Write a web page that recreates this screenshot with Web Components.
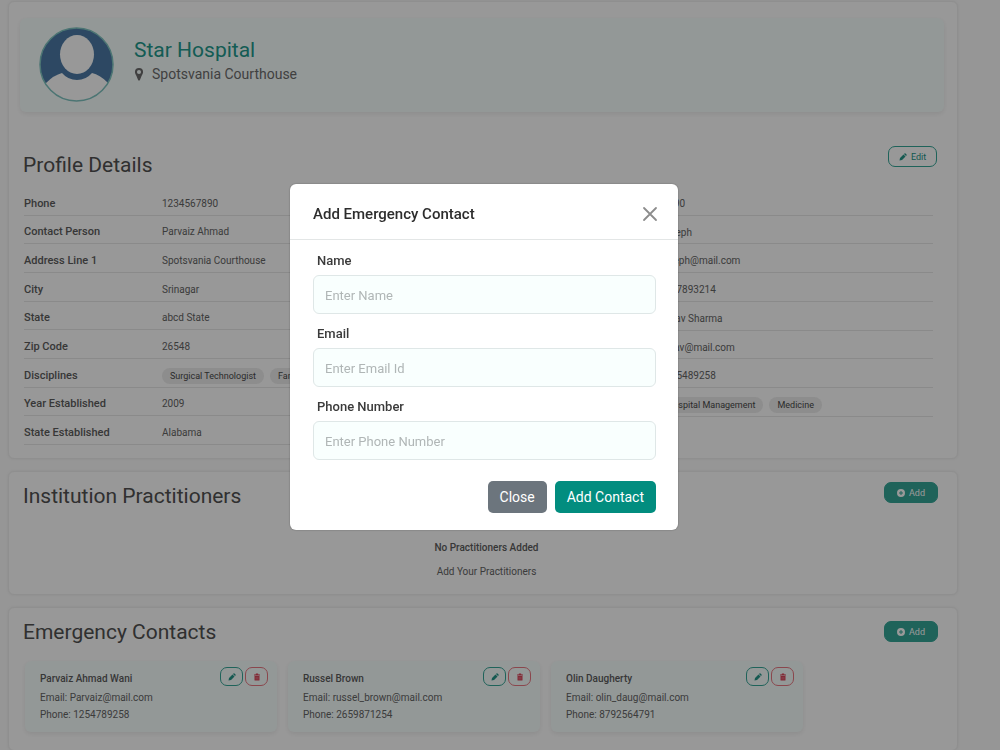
<!DOCTYPE html>
<html lang="en">
<head>
<meta charset="utf-8">
<title>Star Hospital</title>
<style>
  html { overflow: hidden; }
  body { margin: 0; background: #fafafa; color: #646464; font: 10px/16px Roboto, sans-serif; }
</style>
</head>
<body>
<hospital-page></hospital-page>
<script>
const ICONS = {
  pencil: '<svg viewBox="0 0 16 16"><path fill="currentColor" d="M1 15l1-5 7-7 4 4-7 7zM10 2l1-1q1-1 2 0l2 2q1 1 0 2l-1 1z"/></svg>',
  trash: '<svg viewBox="0 0 16 16"><path fill="currentColor" d="M2 3h3l1-2h4l1 2h3v2H2zM3 6h10v8q0 1-1 1H4q-1 0-1-1z"/><path d="M6 8v5M8 8v5M10 8v5" stroke="#fff" stroke-opacity=".35" fill="none"/></svg>',
  plus: '<svg viewBox="0 0 16 16"><path fill="currentColor" fill-rule="evenodd" d="M8 0a8 8 0 1 0 0 16A8 8 0 0 0 8 0zM7 4h2v3h3v2H9v3H7V9H4V7h3z"/></svg>',
  pin: '<svg viewBox="0 0 12 16"><path fill="currentColor" fill-rule="evenodd" d="M6 0a5 5 0 0 0-5 5c0 2 1 3 2 5l2 5q1 1 2 0l2-5c1-2 2-3 2-5a5 5 0 0 0-5-5zm0 2.500a2.500 2.500 0 1 1 0 5 2.500 2.500 0 0 1 0-5z"/></svg>'
};

function define(name, render) {
  customElements.define(name, class extends HTMLElement {
    connectedCallback() {
      if (this.shadowRoot) return;
      const root = this.attachShadow({ mode: 'open' });
      const template = document.createElement('template');
      template.innerHTML = '<style>:host{display:block;box-sizing:border-box}*{box-sizing:border-box}</style>' + render(this);
      root.append(template.content.cloneNode(true));
    }
  });
}

define('action-button', el => `
  <style>
    :host { display: inline-block; }
    button { display: flex; align-items: center; justify-content: center; gap: 4px; width: 100%; height: 21px;
      padding: 0 8px; border: 1px solid #34a596; border-radius: 7px; background: none; color: #239488;
      font: 9px/14px Roboto, sans-serif; }
    svg { display: block; width: 8px; height: 8px; }
    :host([kind=solid]) button { background: #35a597; color: #fff; }
    :host([kind=icon]) button, :host([kind=danger]) button { width: 23px; height: 19px; padding: 0; }
    :host([kind=danger]) button { border-color: #e77781; color: #d9465a; }
  </style>
  <button type="button" aria-label="${el.getAttribute('label')}">${ICONS[el.getAttribute('icon')]}<slot></slot></button>`);

define('tag-chip', () => `
  <style>
    :host { display: inline-block; padding: 0 8px; height: 16px; border-radius: 8px; background: #ebebeb; color: #484848;
      font-size: 9px; line-height: 16px; margin-right: 6px; white-space: nowrap; }
  </style><slot></slot>`);

define('section-card', () => `
  <style>
    :host { border: 1px solid #efefef; border-radius: 6px; background: #fdfdfd; box-shadow: 0 0 3px #0001;
      padding: 9px 18px 0 14px; }
    header { display: flex; justify-content: space-between; align-items: flex-start; }
    h2 { margin: 0; font-size: 21px; line-height: 30px; font-weight: 400; color: #505050; }
  </style>
  <slot name="banner"></slot>
  <header><h2><slot name="title"></slot></h2><slot name="action"></slot></header>
  <slot></slot>`);

define('profile-banner', () => `
  <style>
    :host { display: flex; align-items: center; gap: 20px; height: 94px; padding: 0 19px 2px; border-radius: 6px;
      background: #f6fdfc; box-shadow: 0 2px 4px #0001; }
    svg.avatar { width: 75px; height: 75px; flex: none; }
    .text { padding-bottom: 6px; }
    h1 { margin: 0; font-size: 21px; line-height: 26px; font-weight: 400; color: #22998d; }
    p { display: flex; align-items: center; gap: 8px; margin: 0; font-size: 14px; line-height: 22px; color: #6c6c6c; }
    p svg { width: 10px; height: 13px; }
  </style>
  <svg class="avatar" viewBox="0 0 75 75" role="img" aria-label="Profile picture">
    <defs><clipPath id="round"><circle cx="37.500" cy="37.500" r="36.500"/></clipPath></defs>
    <g clip-path="url(#round)"><path fill="#4b79a5" d="M0 0h75v75H0z"/>
    <path fill="#fdfdfd" d="M0 64L7 56Q15 48 23 46Q29 53 38 53T53 46Q61 48 68 55L75 62V75H0z"/>
    <ellipse cx="38" cy="27.500" rx="17" ry="19.500" fill="#fdfdfd"/></g>
    <circle cx="37.500" cy="37.500" r="36.500" fill="none" stroke="#7fc4c0" stroke-width="1.500"/>
  </svg>
  <div class="text"><h1><slot></slot></h1><p>${ICONS.pin}<slot name="place"></slot></p></div>`);

const LEFT = [['Phone', '1234567890'], ['Contact Person', 'Parvaiz Ahmad'], ['Address Line 1', 'Spotsvania Courthouse'],
  ['City', 'Srinagar'], ['State', 'abcd State'], ['Zip Code', '26548'],
  ['Disciplines', '<tag-chip>Surgical Technologist</tag-chip><tag-chip>Family Medicine</tag-chip>'],
  ['Year Established', '2009'], ['State Established', 'Alabama']];
const RIGHT = [['Fax', '1234567890'], ['Director', 'Daniel Joseph'], ['Director Email', 'daniel_joseph@mail.com'],
  ['Director Phone', '+9198 1237893214'], ['Administrator', 'Mr. K Gaurav Sharma'], ['Admin Email', 'shrm.gaurav@mail.com'],
  ['Admin Phone', '+9198 1235489258'], ['Services', '<tag-chip>IT</tag-chip><tag-chip>Hospital Management</tag-chip><tag-chip>Medicine</tag-chip>']];
const rowsFor = data => data.map(([k, v]) => `<tr><th scope="row">${k}</th><td>${v}</td></tr>`).join('');

define('detail-tables', () => `
  <style>
    :host { display: grid; grid-template-columns: 1fr 1fr; gap: 25px; align-items: start; }
    table { width: 100%; height: 258px; border-collapse: collapse; table-layout: fixed; }
    table + table { height: 230px; }
    th { width: 138px; text-align: left; font-size: 11px; font-weight: 500; color: #5c5c5c; }
    th, td { padding: 6px 0 0; border-bottom: 1px solid #e6e6e6; white-space: nowrap; }
  </style>
  <table>${rowsFor(LEFT)}</table><table>${rowsFor(RIGHT)}</table>`);

define('contact-card', el => `
  <style>
    :host { height: 71px; padding: 6px 9px 0 15px; border-radius: 6px; background: #f6fdfc; box-shadow: 0 2px 4px #0001; }
    header { display: flex; gap: 2px; height: 22px; }
    h3 { flex: 1; margin: 0; font-size: 10px; line-height: 23px; font-weight: 500; color: #5c5c5c; }
    p { margin: 0; line-height: 17px; }
  </style>
  <header><h3>${el.getAttribute('name')}</h3>
    <action-button kind="icon" icon="pencil" label="Edit contact"></action-button>
    <action-button kind="danger" icon="trash" label="Delete contact"></action-button></header>
  <p>Email: ${el.getAttribute('email')}</p><p>Phone: ${el.getAttribute('phone')}</p>`);

define('form-field', el => `
  <style>
    label { display: block; padding: 6px 4px 0; font-size: 13px; line-height: 28px; font-weight: 500; color: #3a3a3a; }
    input { display: block; width: 100%; height: 39px; padding: 1px 11px 0; border: 1px solid #dfe7e7; border-radius: 6px;
      background: #f9fffe; color: #333; font: 13px/20px Roboto, sans-serif; }
    input::placeholder { color: #b0b6b6; opacity: 1; }
  </style>
  <label for="field">${el.getAttribute('label')}</label>
  <input id="field" type="${el.getAttribute('type')}" placeholder="${el.getAttribute('placeholder')}">`);

define('contact-modal', () => `
  <style>
    :host { position: fixed; inset: 0; display: flex; justify-content: center; align-items: flex-start;
      padding: 184px 32px 0 0; background: rgba(0,0,0,.4); }
    section { width: 388px; border-radius: 6px; background: #fff; box-shadow: 0 0 2px #0005; }
    header { display: flex; justify-content: space-between; align-items: center; height: 56px; padding: 5px 20px 0 23px;
      border-bottom: 1px solid #e3e6e6; }
    h2 { margin: 0; font-size: 15px; line-height: 22px; font-weight: 500; color: #2d2d2d; }
    .x { display: block; padding: 0; border: 0; background: none; color: #8c8c8c; }
    .x svg { display: block; width: 16px; height: 16px; }
    form { padding: 1px 22px 17px 23px; }
    footer { display: flex; justify-content: flex-end; gap: 8px; padding-top: 21px; }
    footer button { height: 32px; padding: 0 12px; border: 0; border-radius: 5px; background: #6c757d; color: #fff;
      font: 14px/20px Roboto, sans-serif; }
    footer button.primary { background: #028d7f; }
  </style>
  <section role="dialog" aria-modal="true" aria-labelledby="title">
    <header><h2 id="title">Add Emergency Contact</h2>
      <button class="x" type="button" aria-label="Dismiss"><svg viewBox="0 0 16 16"><path d="M2 2l12 12M14 2L2 14" stroke="currentColor" stroke-width="1.800" stroke-linecap="round"/></svg></button></header>
    <form>
      <form-field label="Name" type="text" placeholder="Enter Name"></form-field>
      <form-field label="Email" type="email" placeholder="Enter Email Id"></form-field>
      <form-field label="Phone Number" type="tel" placeholder="Enter Phone Number"></form-field>
      <footer><button type="button">Close</button><button type="button" class="primary">Add Contact</button></footer>
    </form>
  </section>`);

define('hospital-page', () => `
  <style>
    main { display: grid; gap: 12px; padding: 1px 42px 0 8px; }
    .profile { padding: 16px 20px 13px 14px; }
    profile-banner { margin: 0 -7px 38px -3px; }
    detail-tables { margin: 7px 4px 0 1px; }
    .edit { width: 49px; margin-top: -4px; }
    .add { width: 54px; margin: 1px 1px 0 0; }
    .contacts-card .add { margin-top: 4px; }
    .empty { margin: 0; padding: 25px 0 10px 11px; text-align: center; line-height: 24px; }
    .empty strong { display: block; font-weight: 500; color: #5c5c5c; }
    .contacts { display: grid; grid-template-columns: repeat(3, 252px); gap: 11px; padding: 14px 2px 18px; }
  </style>
  <main>
    <section-card class="profile">
      <profile-banner slot="banner">Star Hospital<span slot="place">Spotsvania Courthouse</span></profile-banner>
      <span slot="title">Profile Details</span>
      <action-button class="edit" slot="action" icon="pencil" label="Edit">Edit</action-button>
      <detail-tables></detail-tables>
    </section-card>
    <section-card>
      <span slot="title">Institution Practitioners</span>
      <action-button class="add" slot="action" kind="solid" icon="plus" label="Add">Add</action-button>
      <p class="empty"><strong>No Practitioners Added</strong>Add Your Practitioners</p>
    </section-card>
    <section-card class="contacts-card">
      <span slot="title">Emergency Contacts</span>
      <action-button class="add" slot="action" kind="solid" icon="plus" label="Add">Add</action-button>
      <div class="contacts">
        <contact-card name="Parvaiz Ahmad Wani" email="Parvaiz@mail.com" phone="1254789258"></contact-card>
        <contact-card name="Russel Brown" email="russel_brown@mail.com" phone="2659871254"></contact-card>
        <contact-card name="Olin Daugherty" email="olin_daug@mail.com" phone="8792564791"></contact-card>
      </div>
    </section-card>
  </main>
  <contact-modal></contact-modal>`);
</script>
</body>
</html>
